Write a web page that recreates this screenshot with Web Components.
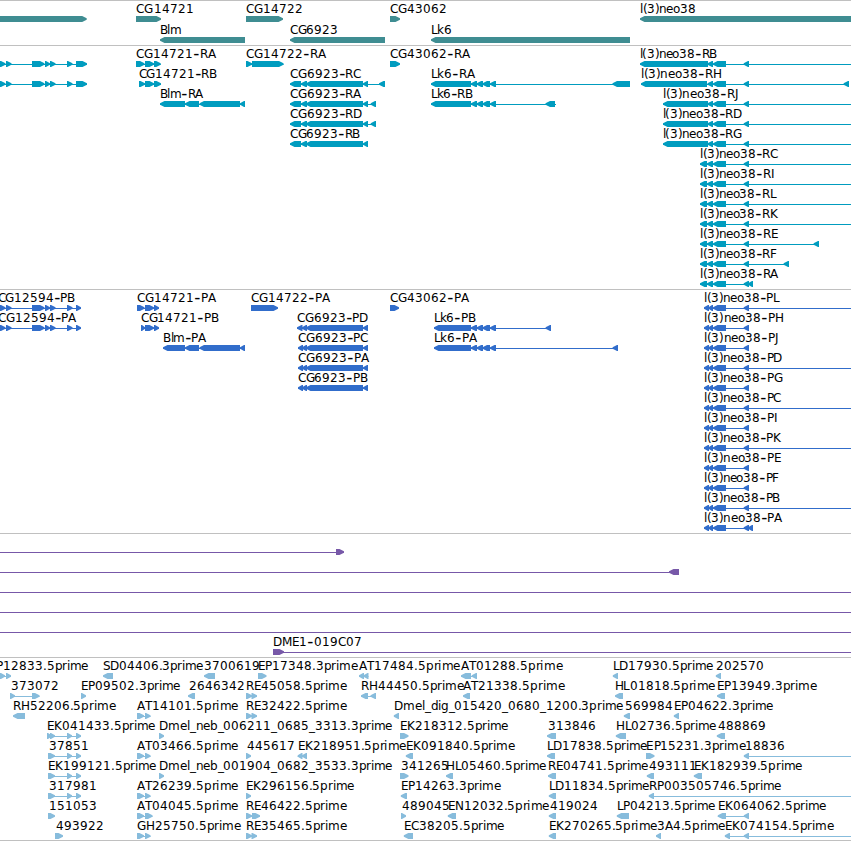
<!DOCTYPE html>
<html lang="en">
<head>
<meta charset="utf-8">
<title>Genome browser</title>
<style>
body { margin: 0; background: #fff; overflow: hidden; }
</style>
</head>
<body>
<genome-browser></genome-browser>
<script>
// Feature syntax: row | strand | label | label start | label end | exons | optional line extent (from,to)
const NEO = '743.7-749';
const EX = (first) => first + ' 713-726 ' + NEO;
const CG125 = '-6-0 0-5.5 6-11.5 32-44.5 45-50 50-55.5 67-72.5 ';
const rows = (s) => s.trim().split('\n').map(l => l.trim());

const GENES = rows(`
0|+||||-9-86.7
0|+|CG14721|136.4|192.5|136-161
0|+|CG14722|246.4|302|246-283
0|+|CG43062|390.6|446|390-400
0|-|l(3)neo38|640.7|695.4|640-880
1|-|Blm|160.7|180.5|160-245
1|-|CG6923|290.6|337.3|290-385
1|-|Lk6|431.6|451|431-630`);

const TRANSCRIPTS = rows(`
0|+||||${CG125}76-87|-6,87
1|+||||${CG125}76-87|-6,87
0|+|CG14721-RA|136.4|216.6|136-144.5 145-154 154-160.7
1|+|CG14721-RB|139.4|217|139-145 145-154 154-161
2|-|Blm-RA|160.7|204.4|160-185 185-199 199.5-240 240-245
0|+|CG14722-RA|246.4|326.6|246-252 252-283.5
0|+|CG43062-RA|390.6|470.6|390-400
1|-|CG6923-RC|290.6|361|290-301 301-307 306-363 363-368 379-385
2|-|CG6923-RA|290.6|362.4|290-301 301-307 306-363 363-368 370.7-376
3|-|CG6923-RD|290.6|362|290-301 301-307 306-363 363-368 370.7-376
4|-|CG6923-RB|290.6|360.4|290-301 301-307 306-363 363-368
1|-|Lk6-RA|431.6|475.7|431-471 471-477 476.7-483 482.5-490 490-496 612.5-630
2|-|Lk6-RB|431.6|473|431-471 471-477 476.7-483 482.5-490 490-496 545.5-555|431,556
0|-|l(3)neo38-RB|640.7|717.4|640-708 ${EX('707.5-713')}|640,851
1|-|l(3)neo38-RH|641.5|720.6|641-707 ${EX('707.5-713')} 843.6-849
2|-|l(3)neo38-RJ|663.5|737.6|663-708 ${EX('707.5-713')}|663,851
3|-|l(3)neo38-RD|663.5|742|663-708 ${EX('707.5-713')}|663,851
4|-|l(3)neo38-RG|663.5|742.4|663-708 ${EX('707.5-713')}|663,851
5|-|l(3)neo38-RC|700.8|778.3|700-707 ${EX('707-713')}|700,851
6|-|l(3)neo38-RI|700.8|773.6|700-707 ${EX('707-713')}|700,851
7|-|l(3)neo38-RL|700.8|776.7|700-707 ${EX('707-713')}|700,851
8|-|l(3)neo38-RK|700.8|778.7|700-707 ${EX('707-713')}|700,851
9|-|l(3)neo38-RE|700.8|777.7|700-707 ${EX('707-713')} 813.6-819
10|-|l(3)neo38-RF|700.8|777|700-707 ${EX('707-713')} 783.6-789
11|-|l(3)neo38-RA|700.8|779.4|700-707 ${EX('707-713')} 748-753`);

const PROTEINS = rows(`
0|+|CG12594-PB|-1.8|74.6|${CG125}76-81|-6,81
1|+|CG12594-PA|-1.8|77|${CG125}76-81|-6,81
0|+|CG14721-PA|137.5|216.7|137-144.5 145-154 154-159
1|+|CG14721-PB|141.5|218.5|141-145 145-154 154-159
2|-|Blm-PA|163.8|207|163-185 185-199 199.5-240 240-245
0|+|CG14722-PA|251.5|331|251-278
0|+|CG43062-PA|390.6|469.8|390-399
1|-|CG6923-PD|297.5|368.3|297-302.5 302-307 306-363 363-368
2|-|CG6923-PC|298.4|368.4|298-303 302-307 306-363 363-368
3|-|CG6923-PA|298.4|369.7|298-303 302-307 306-363 363-368
4|-|CG6923-PB|298.4|367.5|298-303 302-307 306-363 363-368
1|-|Lk6-PB|434.6|475.7|434-471 471-477 476.7-483 482.5-490 490-496 545.6-551
2|-|Lk6-PA|434.6|478|434-471 471-477 476.7-483 482.5-490 490-496 612.6-618`);
[['PL', 780, 1], ['PH', 782.6], ['PJ', 777.7], ['PD', 782.4, 1], ['PG', 782.6], ['PC', 781.3, 1],
 ['PI', 776.6], ['PK', 781.8, 1], ['PE', 780.9], ['PF', 779.2], ['PB', 780.5, 1], ['PA', 783]
].forEach(([n, end, far], i) => PROTEINS.push(
  `${i}|-|l(3)neo38-${n}|704.8|${end}|704-709 ${EX('708.5-713')}${n === 'PA' ? ' 748-753' : ''}|704,${far ? 851 : 749}`));

const CLONES = rows(`
0|+||||336-344|-1,344
1|-||||669-679|-1,679
2|-|||||-1,851
3|-|||||-1,851
4|-|||||-1,851
5|+|DME1-019C07|273.7|361.3|273-284|273,851`);

const RE = '246-252 251.5-257', AT = '137-144 145-150.5', EKX = '48-55 67-72 76-81';
const ESTS = rows(`
0|+|EP12833.5prime|-10.4|88.3|0-5 6-11|-2,11
0|-|SD04406.3prime|102.8|203.2|103-113
0|-|3700619|204.3|258.7|204-215
0|+|EP17348.3prime|259|357.7|258-266.5
0|-|AT17484.5prime|359|460.5|359-364 363.5-368.5
0|-|AT01288.5prime|461|562.5|461-471 471.7-477
0|-|LD17930.5prime|613.8|713.3|612.8-618
0|-|202570|716.3|763.5|715.8-721
1|+|373072|10.5|56.7|10-15 32-39.5
1|+|EP09502.3prime|81.7|180.5|81-86
1|-|2646342|188.7|242.7|188-195
1|+|RE45058.5prime|246.7|346.7|${RE}
1|-|RH44450.5prime|361.9|463.5|361-368 370.5-376
1|-|AT21338.5prime|463.5|564.5|463-470
1|-|HL01818.5prime|615.7|715|615-623
1|-|EP13949.3prime|717.8|816.5|717-725
2|-|RH52206.5prime|13.7|115.5|13-25
2|+|AT14101.5prime|137.5|238.3|${AT}
2|+|RE32422.5prime|246.7|346.7|${RE}
2|-|Dmel_dig_015420_0680_1200.3prime|395|623.2|393.8-399
2|-|569984|624.5|671.5|623.8-630
2|-|EP04622.3prime|674.8|773.3|673.8-679
3|+|EK041433.5prime|48|155.2|47-51.5 50-55 67-72 76-81
3|+|Dmel_neb_006211_0685_3313.3prime|160|392.3|159-164
3|+|EK218312.5prime|401|508.3|400-408.5
3|-|313846|548|594.5|547-556
3|-|HL02736.5prime|616.8|716.3|615.8-626
3|-|488869|718|764.5|716.8-725
4|+|37851|49|87|${EKX}
4|+|AT03466.5prime|137.5|238.3|${AT}
4|+|445617|247|293|246-251
4|-|EK218951.5prime|298.8|406|297.7-302.5 302-307
4|-|EK091840.5prime|407|514.5|405.8-413
4|-|LD17838.5prime|547.9|647.2|547-555
4|+|EP15231.3prime|647.2|745.5|646-654.5
4|-|18836|746|783.5|743.8-749|744,851
5|+|EK199121.5prime|49|156.2|${EKX}
5|+|Dmel_neb_001904_0682_3533.3prime|160|392.3|159-164
5|+|341265|401|446.5|400-408.5
5|-|HL05460.5prime|447.2|546.3|446-453
5|-|RE04741.5prime|549|648|548-556
5|-|493111|648.5|693|646.8-654
5|-|EK182939.5prime|694.8|802.3|693.8-702
6|+|317981|49|95.5|${EKX}
6|+|AT26239.5prime|137.5|238.3|${AT}
6|+|EK296156.5prime|246.7|354.3|246-251
6|-|EP14263.3prime|402|500.5|400.8-407
6|-|LD11834.5prime|549.7|649|548.8-556
6|-|RP003505746.5prime|649.7|781.3|648.8-654|649,851
7|+|151053|49.7|94.7|48-55
7|+|AT04045.5prime|137.5|238.3|137-144 145-152.5
7|+|RE46422.5prime|246.7|346.7|246-252 252-260
7|+|489045|402|448|401-406
7|-|EN12032.5prime|448.6|549|447.8-456
7|-|419024|549.9|596|548.8-556
7|-|LP04213.5prime|617.9|715.3|616.8-629
7|-|EK064062.5prime|719|826.3|717.8-726 743.8-749
8|+|493922|55.8|101.8|55-63
8|+|GH25750.5prime|137.6|240.6|${AT}
8|+|RE35465.5prime|246.7|346.7|${RE}
8|-|EC38205.5prime|405|504.3|403.8-413
8|-|EK270265.5prime|549.8|657|548.8-556
8|-|3A4.5prime|657.2|725.3|656-661
8|-|EK074154.5prime|725.9|833.5|724.8-730 743.8-749|725,851`);

const TRACKS = {
  genes:       { color: '#3f8d92', data: GENES, height: 45, base: 13, pitch: 21 },
  transcripts: { color: '#009cbf', data: TRANSCRIPTS, height: 244, base: 13, pitch: 20 },
  proteins:    { color: '#316dcb', data: PROTEINS, height: 244, base: 13, pitch: 20 },
  clones:      { color: '#7758a8', data: CLONES, height: 124, base: 13, pitch: 20 },
  ests:        { color: '#87bcdc', data: ESTS, height: 183, base: 13, pitch: 20 }
};

const FONT = '12px "DejaVu Sans", sans-serif';
const pen = document.createElement('canvas').getContext('2d');
pen.font = FONT;

// Whole-pixel x for each letter: digits are 8px apart, and the other letters
// share what is left, so that the label's ink runs from x0 to x1.
function label(text, x0, x1, y) {
  const chars = [...text];
  const digit = chars.map(c => /\d/.test(c));
  const adv = chars.map((c, i) => digit[i] ? 8 : c === '-' ? 7 : pen.measureText(c).width);
  const last = pen.measureText(chars[chars.length - 1]).actualBoundingBoxRight;
  const left = pen.measureText(chars[0]).actualBoundingBoxLeft;
  const start = x0 + left - (/[CG]/.test(chars[0]) ? .6 : chars[0] === 'A' ? .4 : 0);
  const ink = adv.slice(0, -1).reduce((a, b) => a + b, 0) + last;
  const flexible = digit.slice(0, -1).filter(d => !d).length;
  const gap = flexible ? (x1 - start - ink) / flexible : 0;
  let x = start;
  const xs = adv.map((a, i) => { const at = x; x += a + (digit[i] ? 0 : gap); return Math.round(at); });
  const dash = text.indexOf('-');
  if (dash < 0) return `<text x="${xs.join(' ')}" y="${y}">${text}</text>`;
  return `<text y="${y}"><tspan x="${xs.slice(0, dash).join(' ')}">${text.slice(0, dash)}</tspan>` +
    `<tspan class="dash" x="${xs[dash] + .3}" y="${y + 1}">-</tspan>` +
    `<tspan x="${xs.slice(dash + 1).join(' ')}" y="${y}">${text.slice(dash + 1)}</tspan></text>`;
}

// Block with a pointed end of up to 5px in the direction of its strand.
function exon(a, b, y, strand) {
  const h = Math.min(5.5, b - a);
  return strand === '+'
    ? `<path d="M${a} ${y}H${b - h + 1}L${b} ${y + 2.2}V${y + 3.8}L${b - h + 1} ${y + 6}H${a}Z"/>`
    : `<path d="M${b} ${y}H${a + h - 1}L${a} ${y + 2.2}V${y + 3.8}L${a + h - 1} ${y + 6}H${b}Z"/>`;
}

class GenomeTrack extends HTMLElement {
  connectedCallback() {
    const t = TRACKS[this.getAttribute('kind')];
    let shapes = '', texts = '';
    for (const line of t.data) {
      const [row, strand, name, x0, x1, exons, extent] = line.split('|');
      const base = t.base + row * t.pitch, top = base + 3;
      const ex = exons ? exons.split(' ').map(e => e.match(/^(-?[\d.]+)-([\d.]+)$/).slice(1).map(Number)) : [];
      const [from, to] = extent ? extent.split(',').map(Number) : [ex[0][0], ex[ex.length - 1][1]];
      if (extent || ex.length > 1) shapes += `<rect x="${from}" y="${top + 3}" width="${to - from}" height="1"/>`;
      for (const [a, b] of ex) shapes += exon(a, b, top, strand);
      if (name) texts += label(name, +x0, +x1, base);
    }
    this.attachShadow({ mode: 'open' }).innerHTML = `
      <style>
        :host { display: block; height: ${t.height}px; box-sizing: border-box;
                background: linear-gradient(#c0c0c0, #c0c0c0) top / 100% 1px no-repeat; }
        svg { display: block; width: 100%; height: 100%; overflow: visible; }
        text { font: ${FONT}; fill: #000; }
        .dash { font-size: 17px; }
      </style>
      <svg><g fill="${t.color}">${shapes}</g>${texts}</svg>`;
  }
}

class GenomeBrowser extends HTMLElement {
  connectedCallback() {
    this.attachShadow({ mode: 'open' }).innerHTML = `
      <style>
        :host { display: flex; flex-direction: column; width: 851px; height: 841px; overflow: hidden;
                box-sizing: border-box; border-bottom: 1px solid #c0c0c0; background: #fff; }
        genome-track { flex: none; }
      </style>
      ${Object.keys(TRACKS).map(k => `<genome-track kind="${k}"></genome-track>`).join('')}`;
  }
}
customElements.define('genome-track', GenomeTrack);
customElements.define('genome-browser', GenomeBrowser);
</script>
</body>
</html>
